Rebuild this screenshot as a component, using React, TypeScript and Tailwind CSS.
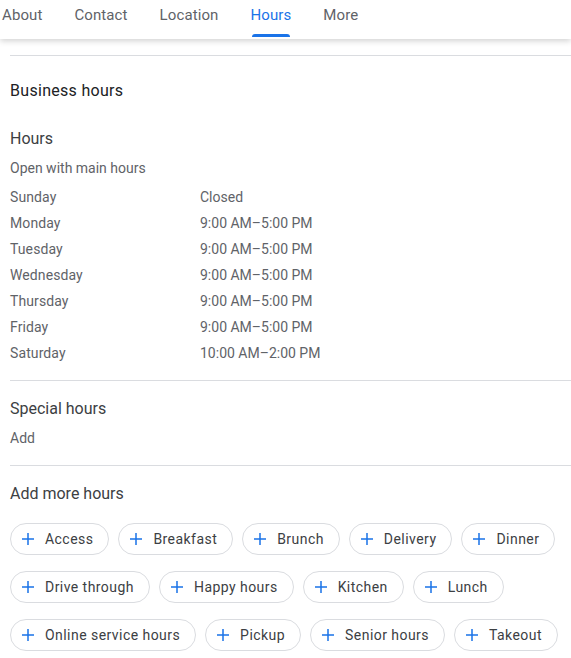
import React from "react";

const days: [string, string][] = [
  ["Sunday", "Closed"],
  ["Monday", "9:00 AM–5:00 PM"],
  ["Tuesday", "9:00 AM–5:00 PM"],
  ["Wednesday", "9:00 AM–5:00 PM"],
  ["Thursday", "9:00 AM–5:00 PM"],
  ["Friday", "9:00 AM–5:00 PM"],
  ["Saturday", "10:00 AM–2:00 PM"],
];

const chipRows: string[][] = [
  ["Access", "Breakfast", "Brunch", "Delivery", "Dinner"],
  ["Drive through", "Happy hours", "Kitchen", "Lunch"],
  ["Online service hours", "Pickup", "Senior hours", "Takeout"],
];

function Plus() {
  return (
    <svg width="12" height="12" viewBox="0 0 12 12" className="shrink-0">
      <path d="M6 0v12M0 6h12" stroke="#1a73e8" strokeWidth="1.5" fill="none" />
    </svg>
  );
}

function Chip({ label }: { label: string }) {
  return (
    <div className="flex h-[32px] items-center gap-[11px] rounded-full border border-[#dadce0] pl-[11px] pr-[15px] text-[14px] leading-[20px] tracking-[0.45px] text-[#3c4043]">
      <Plus />
      <span>{label}</span>
    </div>
  );
}

export default function App() {
  const tabs = ["About", "Contact", "Location", "Hours", "More"];
  return (
    <div className="w-[571px] h-[658px] overflow-hidden bg-white font-['Roboto',sans-serif]">
      <div className="relative z-10 flex h-[39px] items-start gap-[32px] pl-[2px] shadow-[0_2px_6px_rgba(0,0,0,0.18)] bg-white">
        {tabs.map((t) => (
          <div
            key={t}
            className={`relative flex h-[39px] flex-col items-center pt-[5px] text-[15px] leading-[20px] tracking-[0.1px] ${
              t === "Hours" ? "text-[#1a73e8]" : "text-[#5f6368]"
            }`}
          >
            <span>{t}</span>
            {t === "Hours" && (
              <div className="absolute bottom-[2px] left-[2px] right-[1px] h-[3px] rounded-t-[3px] bg-[#1a73e8]" />
            )}
          </div>
        ))}
      </div>

      <div className="pl-[10px]">
        <div className="mt-[16px] border-t border-[#dadce0]" />
        <div className="mt-[25px] text-[16px] leading-[20px] tracking-[0.3px] text-[#202124]">Business hours</div>

        <div className="mt-[28px] text-[16px] leading-[20px] text-[#3c4043]">Hours</div>
        <div className="mt-[9px] text-[14px] leading-[20px] text-[#5f6368]">Open with main hours</div>
        <div className="mt-[6px] flex flex-col">
          {days.map(([d, h]) => (
            <div key={d} className="flex h-[26px] items-center text-[14px] leading-[20px] text-[#5f6368]">
              <span className="w-[190px] tracking-[0.1px]">{d}</span>
              <span>{h}</span>
            </div>
          ))}
        </div>

        <div className="mt-[14px] border-t border-[#dadce0]" />
        <div className="mt-[18px] text-[16px] leading-[20px] text-[#3c4043]">Special hours</div>
        <div className="mt-[9px] text-[14px] leading-[20px] text-[#5f6368]">Add</div>
        <div className="mt-[17px] border-t border-[#dadce0]" />
        <div className="mt-[18px] text-[16px] leading-[20px] text-[#3c4043]">Add more hours</div>

        <div className="mt-[19px] flex flex-col gap-[16px]">
          {chipRows.map((row, i) => (
            <div key={i} className="flex gap-[9px]">
              {row.map((c) => (
                <Chip key={c} label={c} />
              ))}
            </div>
          ))}
        </div>
      </div>
    </div>
  );
}
